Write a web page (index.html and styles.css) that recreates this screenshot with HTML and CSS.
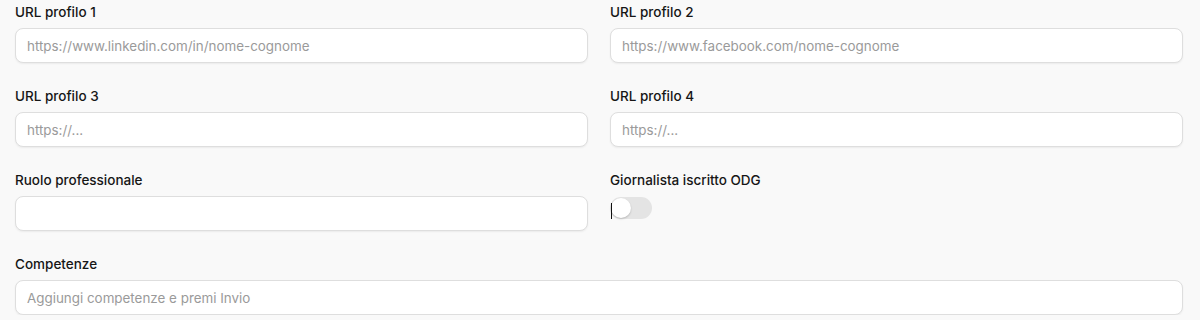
FILE: index.html
```html
<!DOCTYPE html>
<html lang="it">
<head>
<meta charset="utf-8">
<link rel="stylesheet" href="styles.css">
</head>
<body>
<div class="form">
  <div class="field">
    <label class="label">URL profilo 1</label>
    <input class="input" type="text" placeholder="https://www.linkedin.com/in/nome-cognome">
  </div>
  <div class="field">
    <label class="label">URL profilo 2</label>
    <input class="input" type="text" placeholder="https://www.facebook.com/nome-cognome">
  </div>
  <div class="field">
    <label class="label">URL profilo 3</label>
    <input class="input" type="text" placeholder="https://...">
  </div>
  <div class="field">
    <label class="label">URL profilo 4</label>
    <input class="input" type="text" placeholder="https://...">
  </div>
  <div class="field">
    <label class="label">Ruolo professionale</label>
    <input class="input" type="text">
  </div>
  <div class="field">
    <label class="label">Giornalista iscritto ODG</label>
    <div class="toggle"><span class="knob"></span><span class="caret"></span></div>
  </div>
  <div class="field wide">
    <label class="label">Competenze</label>
    <input class="input" type="text" placeholder="Aggiungi competenze e premi Invio">
  </div>
</div>
</body>
</html>
```

FILE: styles.css
```css
html, body {
  margin: 0;
  padding: 0;
  background: #f9f9f9;
  font-family: Inter, "Noto Sans", sans-serif;
}
.form {
  display: grid;
  grid-template-columns: 1fr 1fr;
  column-gap: 22px;
  row-gap: 23px;
  padding: 2px 17px 0 15px;
}
.field {
  display: flex;
  flex-direction: column;
  gap: 6px;
}
.wide {
  grid-column: 1 / -1;
}
.label {
  font-size: 13.5px;
  line-height: 20px;
  font-weight: 500;
  color: #161616;
}
.input {
  box-sizing: border-box;
  height: 35px;
  width: 100%;
  margin: 0;
  padding: 0 11px;
  border: 1px solid #dedede;
  border-radius: 8px;
  background: #fff;
  box-shadow: 0 1px 2px rgba(0,0,0,0.06);
  font-family: Inter, "Noto Sans", sans-serif;
  font-size: 13.4px;
  color: #222;
  outline: none;
}
.input::placeholder {
  color: #9a9a9a;
}
.toggle {
  position: relative;
  width: 42px;
  height: 22px;
  margin-top: 1px;
  border-radius: 11px;
  background: #e4e4e4;
}
.knob {
  position: absolute;
  left: 1px;
  top: 1px;
  width: 20px;
  height: 20px;
  border-radius: 50%;
  background: #fff;
  box-shadow: 0 1px 2px rgba(0,0,0,0.2);
}
.caret {
  position: absolute;
  left: 1px;
  top: 6px;
  width: 1px;
  height: 16px;
  background: #111;
}
```
